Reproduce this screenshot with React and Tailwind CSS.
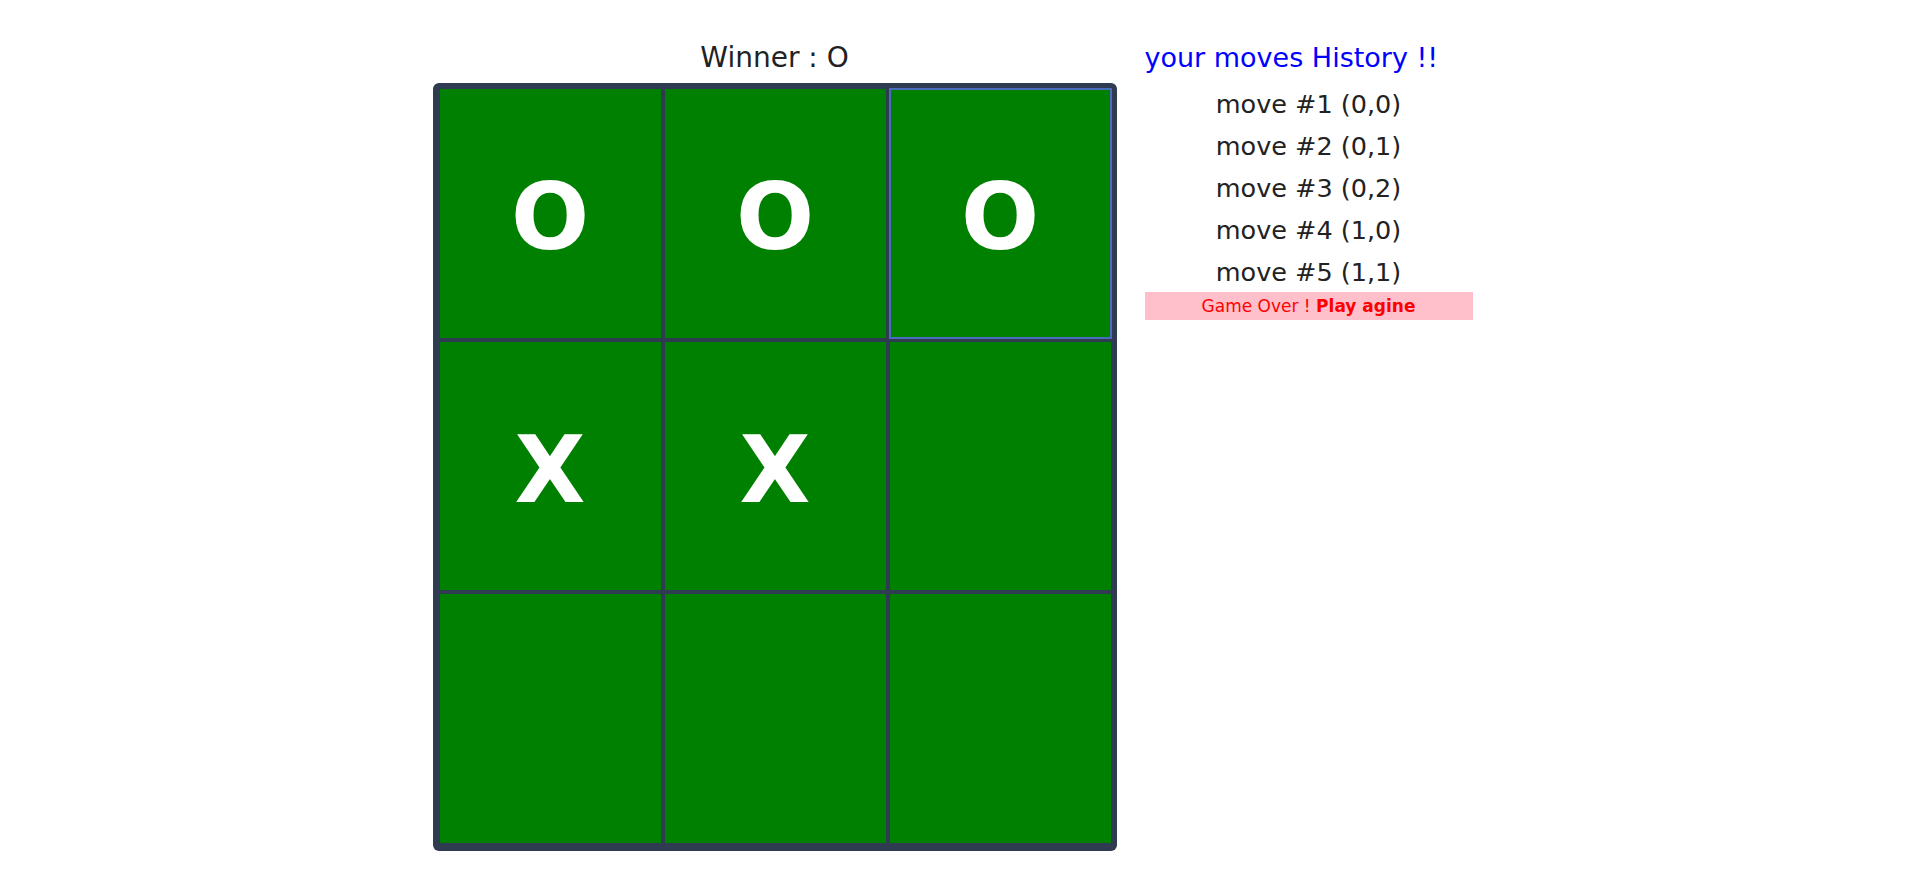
import React from "react";

const board = [
  ["O", "O", "O"],
  ["X", "X", ""],
  ["", "", ""],
];

const moves = [
  "move #1 (0,0)",
  "move #2 (0,1)",
  "move #3 (0,2)",
  "move #4 (1,0)",
  "move #5 (1,1)",
];

export default function App() {
  return (
    <div
      className="min-h-screen bg-white flex justify-center items-start gap-[28px] pt-[42px]"
      style={{ fontFamily: '"DejaVu Sans", sans-serif' }}
    >
      <div className="flex flex-col w-[684px]">
        <div className="text-center text-[28px] leading-[32px] text-[#222] mb-[9px]">
          Winner : O
        </div>
        <div className="h-[768px] bg-[#2e3b50] rounded-[6px] pt-[6px] pb-[8px] pl-[7px] pr-[6px] grid grid-cols-3 grid-rows-3 gap-[4px]">
          {board.flat().map((v, i) => (
            <div
              key={i}
              className={
                i === 2
                  ? "bg-[#008000] flex items-center justify-center outline-2 outline-solid outline-[#4b6cbd] -outline-offset-1"
                  : "bg-[#008000] flex items-center justify-center"
              }
            >
              <span className="text-white font-bold text-[92px] leading-none pt-[10px]">
                {v}
              </span>
            </div>
          ))}
        </div>
      </div>
      <div className="flex flex-col w-[328px]">
        <div className="text-[27px] leading-[32px] text-[#0000ff] whitespace-nowrap">
          your moves History !!
        </div>
        <div className="mt-[13px] flex flex-col gap-[8px]">
          {moves.map((m) => (
            <div
              key={m}
              className="h-[34px] leading-[34px] text-center text-[25.5px] text-[#222] whitespace-nowrap"
            >
              {m}
            </div>
          ))}
        </div>
        <div className="mt-[3px] h-[28px] leading-[28px] bg-[#ffc0cb] text-center text-[17px] text-[#ff0000] whitespace-nowrap">
          Game Over ! <span className="font-bold">Play agine</span>
        </div>
      </div>
    </div>
  );
}
